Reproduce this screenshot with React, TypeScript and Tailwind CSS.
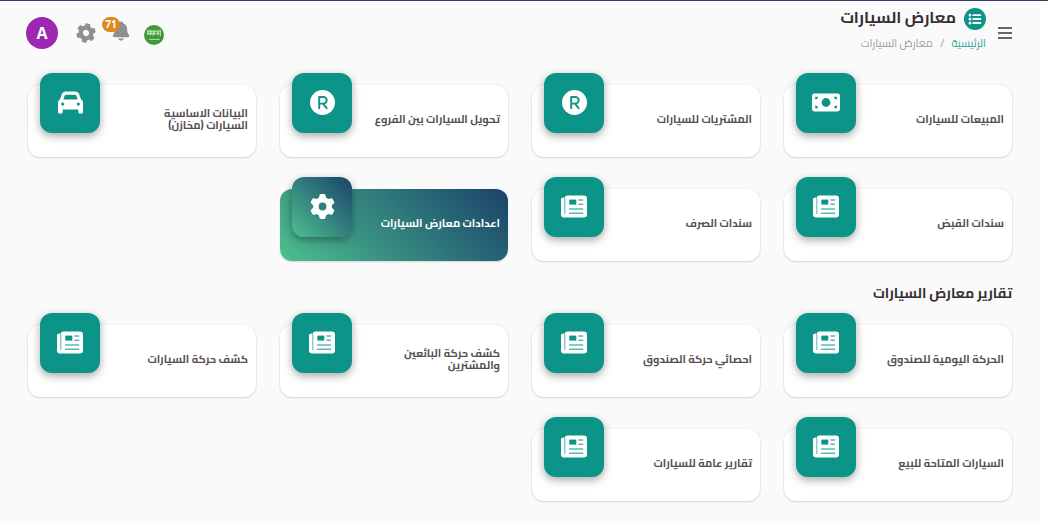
import type { ComponentType } from 'react';
import { FaCar, FaGear } from 'react-icons/fa6';
import { FaCog } from 'react-icons/fa';
import { IoNotifications } from 'react-icons/io5';

type Item = {
  title: string;
  icon: ComponentType<{ className?: string }>;
  active?: boolean;
};

function MoneyIcon({ className }: { className?: string }) {
  return (
    <svg viewBox="0 0 28 25" className={className} aria-hidden="true">
      <rect y="3.5" width="28" height="18" rx="2.4" fill="currentColor" />
      <circle cx="14" cy="12.5" r="4.4" fill="#0d9488" />
      <path
        d="M3.2 9.4V6.7h2.7a2.7 2.7 0 0 1-2.7 2.7zM24.8 9.4V6.7h-2.7a2.7 2.7 0 0 0 2.7 2.7zM3.2 15.6v2.7h2.7a2.7 2.7 0 0 0-2.7-2.7zM24.8 15.6v2.7h-2.7a2.7 2.7 0 0 1 2.7-2.7z"
        fill="#0d9488"
      />
    </svg>
  );
}

function RegisteredIcon({ className }: { className?: string }) {
  return (
    <svg viewBox="0 0 25 25" className={className} aria-hidden="true">
      <circle cx="12.5" cy="12.5" r="12.5" fill="currentColor" />
      <path
        d="M9.2 18.2V7h4.2a3.3 3.3 0 0 1 0 6.6H9.2M13 13.6l3.6 4.6"
        fill="none"
        stroke="#0d9488"
        strokeWidth="1.9"
        strokeLinecap="round"
        strokeLinejoin="round"
      />
    </svg>
  );
}

function NewspaperIcon({ className }: { className?: string }) {
  return (
    <svg viewBox="0 0 26 25" className={className} aria-hidden="true">
      <path
        d="M6.6 1.5H23a3 3 0 0 1 3 3v16a3 3 0 0 1-3 3H3a3 3 0 0 1-3-3V6a1.5 1.5 0 0 1 3.6-1V4.5a3 3 0 0 1 3-3z"
        fill="currentColor"
      />
      <rect x="8.3" y="5.6" width="7" height="5" fill="#0d9488" />
      <path
        d="M17.8 6h4M17.8 10.2h4M8.4 15h13.4M8.4 19.2h13.4"
        fill="none"
        stroke="#0d9488"
        strokeWidth="1"
        strokeLinecap="round"
      />
      <path d="M3.8 5v14.6" fill="none" stroke="#0d9488" strokeWidth="0.7" strokeLinecap="round" />
    </svg>
  );
}

const mainItems: Item[] = [
  { title: 'المبيعات للسيارات', icon: MoneyIcon },
  { title: 'المشتريات للسيارات', icon: RegisteredIcon },
  { title: 'تحويل السيارات بين الفروع', icon: RegisteredIcon },
  { title: 'البيانات الاساسية السيارات (مخازن)', icon: FaCar },
  { title: 'سندات القبض', icon: NewspaperIcon },
  { title: 'سندات الصرف', icon: NewspaperIcon },
  { title: 'اعدادات معارض السيارات', icon: FaGear, active: true },
];

const reportItems: Item[] = [
  { title: 'الحركة اليومية للصندوق', icon: NewspaperIcon },
  { title: 'احصائي حركة الصندوق', icon: NewspaperIcon },
  { title: 'كشف حركة البائعين والمشترين', icon: NewspaperIcon },
  { title: 'كشف حركة السيارات', icon: NewspaperIcon },
  { title: 'السيارات المتاحة للبيع', icon: NewspaperIcon },
  { title: 'تقارير عامة للسيارات', icon: NewspaperIcon },
];

function ListBadge() {
  return (
    <svg viewBox="0 0 22 22" className="size-[22px] shrink-0" aria-hidden="true">
      <circle cx="11" cy="11" r="11" fill="#0d9488" />
      <g fill="#fff">
        <rect x="4.6" y="5.8" width="2.6" height="2.6" rx="1" />
        <rect x="4.6" y="9.8" width="2.6" height="2.6" rx="1" />
        <rect x="4.6" y="13.8" width="2.6" height="2.6" rx="1" />
        <rect x="8.4" y="6.2" width="8.8" height="1.9" rx="0.6" />
        <rect x="8.4" y="10.1" width="8.8" height="1.9" rx="0.6" />
        <rect x="8.4" y="14.1" width="8.8" height="1.9" rx="0.6" />
      </g>
    </svg>
  );
}

function SaudiFlag() {
  return (
    <svg viewBox="0 0 20 20" className="size-5" aria-hidden="true">
      <circle cx="10" cy="10" r="10" fill="#3d9a35" />
      <g fill="none" stroke="#d8ead6" strokeWidth="0.8" strokeLinecap="round">
        <path d="M3.6 5.4v4.4M5 5.2v3.4q0 1.6 1.4 1.2V5.6M7.8 5.2v4.6h1.6V6M10.6 5.2v4.6M12 5.6q1.6-.4 1.4 1.4v2.8M14.8 5.2v4.6M16.4 5.4v5.6" />
        <path d="M3.6 6.4h12.8M3.6 8.6h11" strokeWidth="0.5" />
        <path d="M5.6 14.4h9.8" strokeWidth="0.8" />
      </g>
    </svg>
  );
}

function Header() {
  return (
    <header className="flex items-center justify-between pt-2">
      <div className="flex items-center gap-3">
        <button type="button" aria-label="القائمة" className="flex h-5 w-[14px] items-center">
          <svg viewBox="0 0 14 12" className="h-3 w-[14px]" aria-hidden="true">
            <path d="M0 1h14M0 6h14M0 11h14" stroke="#6f6266" strokeWidth="1.8" />
          </svg>
        </button>
        <div>
          <div className="flex h-5 items-center gap-2">
            <ListBadge />
            <h1 className="pb-1 text-[16px] leading-5 font-bold text-[#332f33]">معارض السيارات</h1>
          </div>
          <nav className="flex h-7 items-center gap-[7px] text-[11px] text-[#9a9a9a]">
            <a href="#home" className="text-[#2fa399]">الرئيسية</a>
            <span>/</span>
            <span>معارض السيارات</span>
          </nav>
        </div>
      </div>

      <div className="-me-0.5 flex items-center">
        <button type="button" aria-label="اللغة" className="pt-1">
          <SaudiFlag />
        </button>
        <button type="button" aria-label="الإشعارات" className="relative ms-3 pb-1 text-[#8e908f]">
          <IoNotifications className="size-[22px]" />
          <span className="absolute -top-[3px] -left-2 flex h-[15px] w-[18px] items-center justify-center rounded-full bg-[#dd8a1c] font-['Open_Sans',sans-serif] text-[10px] font-bold text-white">
            71
          </span>
        </button>
        <button type="button" aria-label="الإعدادات" className="ms-[14px] text-[#8e908f]">
          <FaCog className="size-5 rotate-12" />
        </button>
        <button
          type="button"
          className="ms-[18px] flex size-8 items-center justify-center rounded-full bg-[#9c27b0] font-['Open_Sans',sans-serif] text-base font-bold text-white"
        >
          A
        </button>
      </div>
    </header>
  );
}

function MenuCard({ title, icon: Icon, active }: Item) {
  return (
    <a
      href="#"
      className={
        active
          ? 'flex h-[72px] flex-row-reverse justify-between rounded-xl bg-linear-45 from-[#4fc08d] to-[#1c4268] px-3 text-white shadow-[0_1px_2px_rgba(0,0,0,0.15)]'
          : 'flex h-[72px] flex-row-reverse justify-between rounded-xl bg-white px-3 text-[#555053] shadow-[0_0_2px_rgba(0,0,0,0.12),0_1px_2px_rgba(0,0,0,0.12)]'
      }
    >
      <span
        className={
          active
            ? '-mt-3 flex size-[60px] shrink-0 items-center justify-center rounded-xl bg-linear-45 from-[#4fc08d] to-[#1c4268] pb-0.5 text-white shadow-[0_3px_8px_rgba(0,0,0,0.35)]'
            : '-mt-3 flex size-[60px] shrink-0 items-center justify-center rounded-xl bg-[#0d9488] pb-0.5 text-white shadow-[0_3px_8px_rgba(0,0,0,0.35)]'
        }
      >
        <Icon className="h-[25px] w-auto" />
      </span>
      <span className="-ms-1 flex max-w-[127px] items-center pb-1 text-[11px] leading-3 font-bold">{title}</span>
    </a>
  );
}

function CardGrid({ items }: { items: Item[] }) {
  return (
    <div className="grid grid-cols-4 gap-x-6 gap-y-8">
      {items.map((item) => (
        <MenuCard key={item.title} {...item} />
      ))}
    </div>
  );
}

export default function App() {
  return (
    <div
      dir="rtl"
      className="flex min-h-screen flex-col border-t border-[#3b3568] bg-white pr-2 font-['Cairo','Noto_Sans_Arabic','DejaVu_Sans',sans-serif]"
    >
      <div className="grow bg-[#fafafa] px-7 pb-5">
        <Header />
        <main className="pt-7">
          <CardGrid items={mainItems} />
          <h2 className="py-5 text-[14px] leading-6 font-bold text-[#332f33]">تقارير معارض السيارات</h2>
          <CardGrid items={reportItems} />
        </main>
      </div>
    </div>
  );
}
